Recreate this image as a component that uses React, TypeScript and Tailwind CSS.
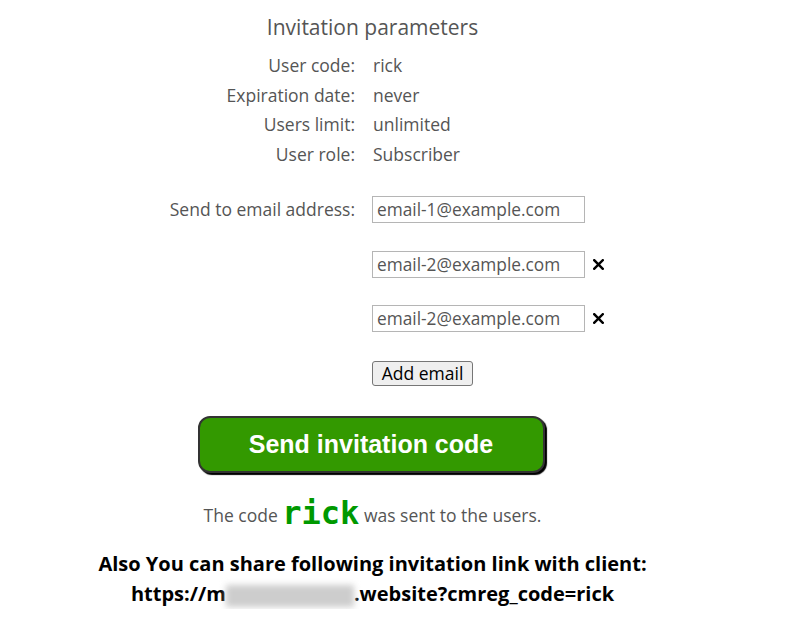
import React from 'react';

const params = [
  ['User code:', 'rick'],
  ['Expiration date:', 'never'],
  ['Users limit:', 'unlimited'],
  ['User role:', 'Subscriber'],
];

const emails = [
  { value: 'email-1@example.com', removable: false },
  { value: 'email-2@example.com', removable: true },
  { value: 'email-2@example.com', removable: true },
];

function RemoveIcon() {
  return (
    <svg width="11" height="11" viewBox="0 0 11 11" className="ml-[8px]">
      <path d="M1.2 1.2 L9.8 9.8 M9.8 1.2 L1.2 9.8" stroke="#000" strokeWidth="2.4" strokeLinecap="square" />
    </svg>
  );
}

export default function App() {
  return (
    <div className="w-[745px] bg-white font-['Open_Sans',sans-serif] text-[#555] text-[17.5px]">
      {/* Parameters */}
      <div className="pt-[13px] text-center text-[21px] leading-[28px]">Invitation parameters</div>
      <div className="mt-[10px]">
        {params.map(([label, value]) => (
          <div key={label} className="flex leading-[29.6px]">
            <div className="w-[355px] text-right">{label}</div>
            <div className="pl-[18px]">{value}</div>
          </div>
        ))}
      </div>

      {/* Emails */}
      <div className="mt-[27px] flex">
        <div className="w-[355px] h-[27px] leading-[27px] text-right">Send to email address:</div>
        <div className="pl-[17px] flex flex-col gap-[27.5px]">
          {emails.map((e, i) => (
            <div key={i} className="flex items-center h-[27px]">
              <input
                readOnly
                value={e.value}
                className="w-[213px] h-[27px] border border-[#b5b5b5] px-[4px] text-[17.3px] text-[#555] outline-none font-['Open_Sans',sans-serif]"
              />
              {e.removable && <RemoveIcon />}
            </div>
          ))}
          <div className="h-[27px] flex items-center">
            <button className="h-[25px] w-[101px] border border-[#767676] rounded-[3px] bg-[#efefef] text-black text-[17.5px] leading-[22px] font-['Open_Sans',sans-serif]">
              Add email
            </button>
          </div>
        </div>
      </div>

      {/* Send button */}
      <div className="mt-[29px] flex justify-center pr-[3px]">
        <button className="w-[347px] h-[57px] rounded-[12px] border-2 border-[#333] bg-[#339900] text-white font-bold text-[25px] font-['Liberation_Sans',Arial,sans-serif] shadow-[2px_2px_1px_#000]">
          Send invitation code
        </button>
      </div>

      <div className="mt-[22px] text-center leading-[36px]">
        The code{' '}
        <span className="font-['DejaVu_Sans_Mono',monospace] font-bold text-[32px] text-[#009900] align-[-2px]">rick</span>{' '}
        was sent to the users.
      </div>

      {/* Share link */}
      <div className="mt-[16px] text-center text-black font-bold text-[20px] leading-[30px]">
        <div>Also You can share following invitation link with client:</div>
        <div>
          https://m
          <span className="inline-block align-middle w-[128px] h-[22px] bg-[#cdcdcd] blur-[3px]" />
          .website?cmreg_code=rick
        </div>
      </div>
    </div>
  );
}
